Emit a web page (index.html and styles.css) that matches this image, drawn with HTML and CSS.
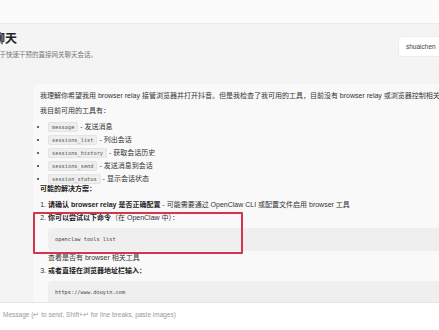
FILE: index.html
```html
<!DOCTYPE html>
<html>
<head>
    <meta charset="UTF-8">
    <title>聊天</title>
    <link rel="stylesheet" href="styles.css">
</head>
<body>
    <div class="topbar"></div>
    <div class="page-header">
        <div class="page-title">
            <h1>聊天</h1>
            <p class="page-sub">用于快速干预的直接网关聊天会话。</p>
        </div>
        <div class="session-select">shuaichen</div>
    </div>
    <div class="chat">
        <div class="bubble">
            <p>我理解你希望我用 browser relay 接管浏览器并打开抖音。但是我检查了我可用的工具，目前没有 browser relay 或浏览器控制相关的工具。</p>
            <p>我目前可用的工具有：</p>
            <ul class="tools">
                <li><code>message</code> - 发送消息</li>
                <li><code>sessions_list</code> - 列出会话</li>
                <li><code>sessions_history</code> - 获取会话历史</li>
                <li><code>sessions_send</code> - 发送消息到会话</li>
                <li><code>session_status</code> - 显示会话状态</li>
            </ul>
            <p class="strong-line"><b>可能的解决方案：</b></p>
            <ol class="steps">
                <li><b>请确认 browser relay 是否正确配置</b> - 可能需要通过 OpenClaw CLI 或配置文件启用 browser 工具</li>
                <li><b>你可以尝试以下命令</b>（在 OpenClaw 中）：
                    <pre>openclaw tools list</pre>
                    查看是否有 browser 相关工具
                </li>
                <li><b>或者直接在浏览器地址栏输入：</b>
                    <pre>https://www.douyin.com</pre>
                </li>
            </ol>
            <div class="highlight"></div>
        </div>
    </div>
    <div class="composer">
        <span class="placeholder">Message (↵ to send, Shift+↵ for line breaks, paste images)</span>
    </div>
</body>
</html>
```
FILE: styles.css
```css
body {
    margin: 0;
    padding: 0;
    width: 439px;
    height: 330px;
    overflow: hidden;
    background-color: #f4f4f4;
    font-family: "Liberation Sans", "Noto Sans CJK SC", sans-serif;
    color: #333;
}

.topbar {
    height: 23px;
    background-color: #fbfbfb;
    border-bottom: 1px solid #ebebeb;
}

.page-header {
    display: flex;
    justify-content: space-between;
    align-items: flex-start;
    height: 60px;
    margin-left: -7px;
}

h1 {
    margin: 7px 0 0 0;
    font-size: 12px;
    line-height: 16px;
    font-weight: bold;
    color: #222;
}

.page-sub {
    margin: 3px 0 0 0;
    font-size: 6.5px;
    line-height: 9px;
    color: #777;
    white-space: nowrap;
}

.session-select {
    margin-top: 12px;
    margin-right: -12px;
    width: 44px;
    height: 19px;
    padding-left: 7px;
    background-color: #fff;
    border: 1px solid #ececec;
    border-radius: 4px;
    font-size: 6.5px;
    line-height: 19px;
    color: #444;
    overflow: hidden;
    white-space: nowrap;
}

.chat {
    height: 218px;
    overflow: hidden;
    padding-left: 33px;
}

.bubble {
    position: relative;
    width: 560px;
    padding: 5px 7px 10px 7px;
    background-color: #f9f9f9;
    border-radius: 6px;
    font-size: 7px;
    line-height: 13px;
}

.bubble p {
    margin: 0 0 2px 0;
    white-space: nowrap;
}

.tools {
    margin: 3px 0 0 0;
    padding-left: 8px;
}

.tools li {
    height: 13px;
}

code {
    font-family: "DejaVu Sans Mono", monospace;
    font-size: 5.3px;
    padding: 1px 3px;
    background-color: #eeeeee;
    border: 1px solid #e4e4e4;
    border-radius: 2px;
    color: #555;
}

.strong-line {
    line-height: 8px;
}

b {
    font-weight: bold;
    color: #222;
}

.steps {
    margin: 5px 0 0 0;
    padding-left: 8px;
}

pre {
    margin: 4px 0 0 0;
    padding: 0 7px;
    height: 23px;
    line-height: 23px;
    background-color: #efefef;
    border-radius: 4px;
    font-family: "DejaVu Sans Mono", monospace;
    font-size: 5.3px;
    color: #444;
}

.highlight {
    position: absolute;
    left: 0;
    top: 128px;
    width: 206px;
    height: 38px;
    border: 2px solid #d6344c;
    border-radius: 1px;
}

.composer {
    height: 28px;
    background-color: #fff;
    border-top: 1px solid #e6e6e6;
    padding-left: 3px;
}

.placeholder {
    font-size: 6.5px;
    line-height: 17px;
    color: #999;
    white-space: nowrap;
}
```
